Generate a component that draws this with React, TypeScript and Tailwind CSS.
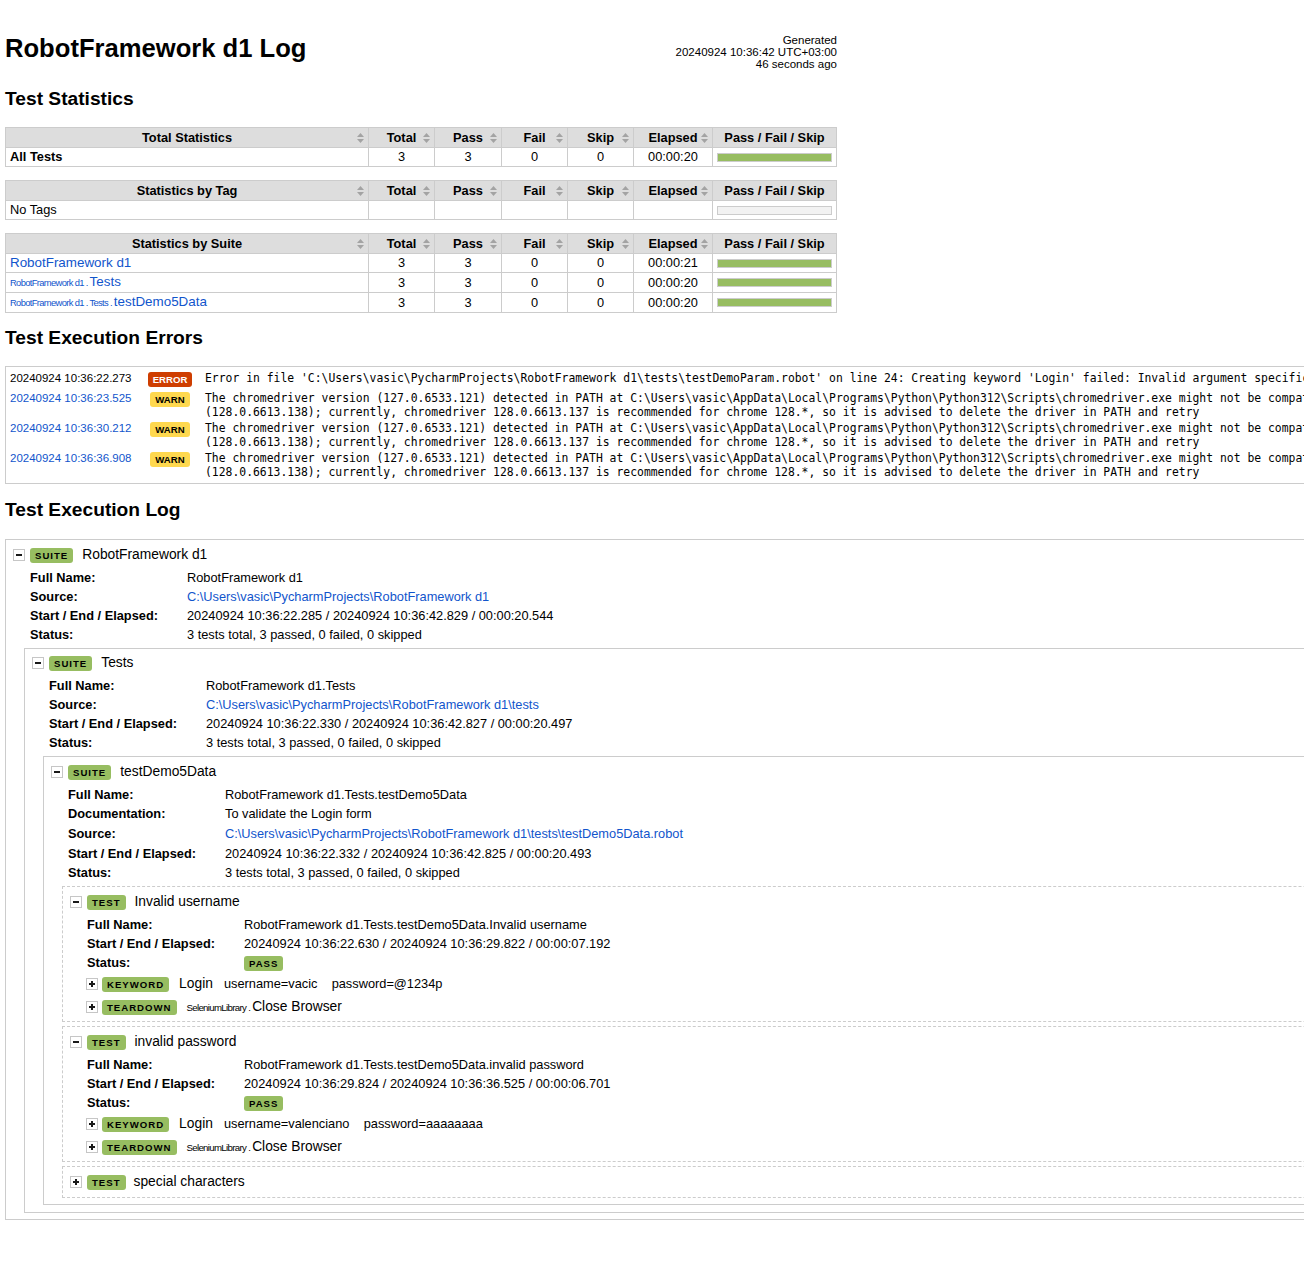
import React from "react";

type StatRow = {
  name: React.ReactNode;
  total: string;
  pass: string;
  fail: string;
  skip: string;
  elapsed: string;
  graph: "pass" | "empty";
};

const SortIcon = () => (
  <svg width="7" height="10" viewBox="0 0 7 10" className="shrink-0">
    <path d="M3.5 0L7 4H0Z" fill="#a3a3a3" />
    <path d="M0 6H7L3.5 10Z" fill="#a3a3a3" />
  </svg>
);

const HeadCell = ({ children, sort = true }: { children: React.ReactNode; sort?: boolean }) => (
  <th className="border border-[#ccc] bg-[#ddd] px-[4px] py-[2px] font-bold leading-[15px]">
    <div className="grid grid-cols-[1fr_auto_1fr] items-center">
      <span />
      <span className="whitespace-nowrap">{children}</span>
      <span className="flex justify-end">{sort && <SortIcon />}</span>
    </div>
  </th>
);

const StatsTable = ({ title, rows }: { title: string; rows: StatRow[] }) => (
  <table className="w-[832px] table-fixed border-collapse">
    <colgroup>
      <col />
      <col className="w-[66px]" />
      <col className="w-[67px]" />
      <col className="w-[66px]" />
      <col className="w-[66px]" />
      <col className="w-[79px]" />
      <col className="w-[124px]" />
    </colgroup>
    <thead>
      <tr>
        <HeadCell>{title}</HeadCell>
        <HeadCell>Total</HeadCell>
        <HeadCell>Pass</HeadCell>
        <HeadCell>Fail</HeadCell>
        <HeadCell>Skip</HeadCell>
        <HeadCell>Elapsed</HeadCell>
        <HeadCell sort={false}>Pass / Fail / Skip</HeadCell>
      </tr>
    </thead>
    <tbody>
      {rows.map((r, i) => (
        <tr key={i} className="leading-[16px]">
          <td className="border border-[#ccc] px-[4px] py-[1px] text-left align-middle">{r.name}</td>
          <td className="border border-[#ccc] px-[4px] py-[1px] text-center align-middle">{r.total}</td>
          <td className="border border-[#ccc] px-[4px] py-[1px] text-center align-middle">{r.pass}</td>
          <td className="border border-[#ccc] px-[4px] py-[1px] text-center align-middle">{r.fail}</td>
          <td className="border border-[#ccc] px-[4px] py-[1px] text-center align-middle">{r.skip}</td>
          <td className="border border-[#ccc] px-[4px] py-[1px] text-center align-middle">{r.elapsed}</td>
          <td className="border border-[#ccc] px-[4px] py-[1px] align-middle">
            {r.graph === "pass" ? (
              <div className="h-[9px] border border-[#ccc] bg-[#97bd61]" />
            ) : (
              <div className="h-[9px] border border-[#ccc] bg-[#f2f2f2]" />
            )}
          </td>
        </tr>
      ))}
    </tbody>
  </table>
);

const Parent = ({ children }: { children: React.ReactNode }) => (
  <span className="text-[9.4px] tracking-[-0.07em]">{children}</span>
);

const SuiteLink = ({ parent, name }: { parent?: string; name: string }) => (
  <span className="text-[#15c]">
    {parent && <Parent>{parent} . </Parent>}
    <span className="text-[13.4px]">{name}</span>
  </span>
);

const chromeMsg =
  "The chromedriver version (127.0.6533.121) detected in PATH at C:\\Users\\vasic\\AppData\\Local\\Programs\\Python\\Python312\\Scripts\\chromedriver.exe might not be compatible with the detected chrome version\n(128.0.6613.138); currently, chromedriver 128.0.6613.137 is recommended for chrome 128.*, so it is advised to delete the driver in PATH and retry";

const errors = [
  {
    time: "20240924 10:36:22.273",
    level: "ERROR",
    link: false,
    msg: "Error in file 'C:\\Users\\vasic\\PycharmProjects\\RobotFramework d1\\tests\\testDemoParam.robot' on line 24: Creating keyword 'Login' failed: Invalid argument specification: Invalid argument syntax 'password=@1234p'.",
  },
  { time: "20240924 10:36:23.525", level: "WARN", link: true, msg: chromeMsg },
  { time: "20240924 10:36:30.212", level: "WARN", link: true, msg: chromeMsg },
  { time: "20240924 10:36:36.908", level: "WARN", link: true, msg: chromeMsg },
];

const Toggle = ({ open }: { open: boolean }) => (
  <svg width="12" height="12" viewBox="0 0 12 12" className="shrink-0">
    <rect x="0.5" y="0.5" width="11" height="11" fill="#fff" stroke="#c6c6c6" />
    <rect x="3" y="5" width="6" height="2" fill="#1a1a1a" />
    {!open && <rect x="5" y="3" width="2" height="6" fill="#1a1a1a" />}
  </svg>
);

const Label = ({ children }: { children: React.ReactNode }) => (
  <span className="inline-block h-[15px] rounded-[3px] bg-[#97bd61] px-[5px] text-[9.6px] font-bold leading-[15px] tracking-[1px] text-black">
    {children}
  </span>
);

const Header = ({ open, kind, name, top }: { open: boolean; kind: string; name: string; top: string }) => (
  <div className={`flex h-[22px] items-center ${top}`}>
    <Toggle open={open} />
    <span className="ml-[5px]">
      <Label>{kind}</Label>
    </span>
    <span className="ml-[9px] text-[13.8px]">{name}</span>
  </div>
);

type MetaRow = [string, React.ReactNode, string?];

const Meta = ({ rows }: { rows: MetaRow[] }) => (
  <div className="ml-[17px] mt-[2px]">
    {rows.map(([k, v, h], i) => (
      <div key={i} className={`flex items-center ${h ?? "h-[19px]"}`}>
        <div className="w-[157px] shrink-0 font-bold">{k}</div>
        <div className="whitespace-nowrap">{v}</div>
      </div>
    ))}
  </div>
);

const Src = ({ children }: { children: React.ReactNode }) => <span className="text-[#15c]">{children}</span>;

const KeywordRow = ({ kind, children }: { kind: string; children: React.ReactNode }) => (
  <div className="ml-[16px] mt-[1px] flex h-[22px] items-center">
    <Toggle open={false} />
    <span className="ml-[4px]">
      <Label>{kind}</Label>
    </span>
    <span className="ml-[10px] flex items-baseline whitespace-pre">{children}</span>
  </div>
);

const TestBox = ({
  name,
  fullName,
  times,
  user,
  password,
}: {
  name: string;
  fullName: string;
  times: string;
  user: string;
  password: string;
}) => (
  <div className="mt-[4px] border border-dashed border-[#ccc] pb-[3px] pl-[7px]">
    <Header open kind="TEST" name={name} top="mt-[4px]" />
    <Meta
      rows={[
        ["Full Name:", fullName],
        ["Start / End / Elapsed:", times],
        ["Status:", <Label key="p">PASS</Label>],
      ]}
    />
    <KeywordRow kind="KEYWORD">
      <span className="text-[13.8px]">Login</span>
      <span className="ml-[11px] text-[12.8px]">{`${user}    ${password}`}</span>
    </KeywordRow>
    <KeywordRow kind="TEARDOWN">
      <span className="text-[9.66px] tracking-[-0.07em]">SeleniumLibrary . </span>
      <span className="text-[13.8px]">Close Browser</span>
    </KeywordRow>
  </div>
);

export default function App() {
  return (
    <div className="w-full overflow-hidden bg-white pb-[45px] pl-[5px] font-['Liberation_Sans',Arial,sans-serif] text-[12.8px] text-black">
      <header className="flex w-[832px] items-start justify-between pt-[33px]">
        <h1 className="text-[25.6px] font-bold leading-[30px]">RobotFramework d1 Log</h1>
        <div className="mt-[1px] text-right text-[11.5px] leading-[12px]">
          <div>Generated</div>
          <div>20240924 10:36:42 UTC+03:00</div>
          <div>46 seconds ago</div>
        </div>
      </header>

      <h2 className="mt-[18px] text-[19.2px] font-bold leading-[22px]">Test Statistics</h2>
      <div className="mt-[17px] flex flex-col gap-[13px]">
        <StatsTable
          title="Total Statistics"
          rows={[
            {
              name: <span className="font-bold">All Tests</span>,
              total: "3",
              pass: "3",
              fail: "0",
              skip: "0",
              elapsed: "00:00:20",
              graph: "pass",
            },
          ]}
        />
        <StatsTable
          title="Statistics by Tag"
          rows={[{ name: "No Tags", total: "", pass: "", fail: "", skip: "", elapsed: "", graph: "empty" }]}
        />
        <StatsTable
          title="Statistics by Suite"
          rows={[
            { name: <SuiteLink name="RobotFramework d1" />, total: "3", pass: "3", fail: "0", skip: "0", elapsed: "00:00:21", graph: "pass" },
            { name: <SuiteLink parent="RobotFramework d1" name="Tests" />, total: "3", pass: "3", fail: "0", skip: "0", elapsed: "00:00:20", graph: "pass" },
            { name: <SuiteLink parent="RobotFramework d1 . Tests" name="testDemo5Data" />, total: "3", pass: "3", fail: "0", skip: "0", elapsed: "00:00:20", graph: "pass" },
          ]}
        />
      </div>

      <h2 className="mt-[14px] text-[19.2px] font-bold leading-[22px]">Test Execution Errors</h2>
      <div className="mt-[17px] w-[1700px] border border-[#ccc] py-[3px] pl-[4px]">
        {errors.map((e, i) => (
          <div key={i} className="flex py-[1px]">
            <div className={`w-[130px] shrink-0 whitespace-nowrap text-[11.5px] leading-[14px] ${e.link ? "text-[#15c]" : "text-black"}`}>{e.time}</div>
            <div className="flex h-[18px] w-[60px] shrink-0 justify-center pt-[1px]">
              {e.level === "ERROR" ? (
                <span className="h-[15px] rounded-[3px] bg-[#ce3e01] px-[5px] text-[9.6px] font-bold leading-[15px] text-white">ERROR</span>
              ) : (
                <span className="h-[15px] rounded-[3px] bg-[#fed84f] px-[5px] text-[9.6px] font-bold leading-[15px] text-black">WARN</span>
              )}
            </div>
            <div className="whitespace-pre pl-[5px] font-['DejaVu_Sans_Mono',monospace] text-[11.4px] leading-[14px]">{e.msg}</div>
          </div>
        ))}
      </div>

      <h2 className="mt-[15px] text-[19.2px] font-bold leading-[22px]">Test Execution Log</h2>
      <div className="mt-[18px] w-[1700px] border border-[#ccc] pb-[6px] pl-[7px]">
        <Header open kind="SUITE" name="RobotFramework d1" top="mt-[4px]" />
        <Meta
          rows={[
            ["Full Name:", "RobotFramework d1"],
            ["Source:", <Src key="s">C:\Users\vasic\PycharmProjects\RobotFramework d1</Src>],
            ["Start / End / Elapsed:", "20240924 10:36:22.285 / 20240924 10:36:42.829 / 00:00:20.544"],
            ["Status:", "3 tests total, 3 passed, 0 failed, 0 skipped"],
          ]}
        />
        <div className="ml-[11px] mt-[4px] border border-[#ccc] pb-[7px] pl-[7px]">
          <Header open kind="SUITE" name="Tests" top="mt-[3px]" />
          <Meta
            rows={[
              ["Full Name:", "RobotFramework d1.Tests"],
              ["Source:", <Src key="s">C:\Users\vasic\PycharmProjects\RobotFramework d1\tests</Src>],
              ["Start / End / Elapsed:", "20240924 10:36:22.330 / 20240924 10:36:42.827 / 00:00:20.497"],
              ["Status:", "3 tests total, 3 passed, 0 failed, 0 skipped"],
            ]}
          />
          <div className="ml-[11px] mt-[4px] border border-[#ccc] pb-[6px] pl-[7px]">
            <Header open kind="SUITE" name="testDemo5Data" top="mt-[4px]" />
            <Meta
              rows={[
                ["Full Name:", "RobotFramework d1.Tests.testDemo5Data"],
                ["Documentation:", "To validate the Login form", "h-[20px]"],
                ["Source:", <Src key="s">C:\Users\vasic\PycharmProjects\RobotFramework d1\tests\testDemo5Data.robot</Src>, "h-[20px]"],
                ["Start / End / Elapsed:", "20240924 10:36:22.332 / 20240924 10:36:42.825 / 00:00:20.493"],
                ["Status:", "3 tests total, 3 passed, 0 failed, 0 skipped"],
              ]}
            />
            <div className="ml-[11px]">
              <TestBox
                name="Invalid username"
                fullName="RobotFramework d1.Tests.testDemo5Data.Invalid username"
                times="20240924 10:36:22.630 / 20240924 10:36:29.822 / 00:00:07.192"
                user="username=vacic"
                password="password=@1234p"
              />
              <TestBox
                name="invalid password"
                fullName="RobotFramework d1.Tests.testDemo5Data.invalid password"
                times="20240924 10:36:29.824 / 20240924 10:36:36.525 / 00:00:06.701"
                user="username=valenciano"
                password="password=aaaaaaaa"
              />
              <div className="mt-[4px] border border-dashed border-[#ccc] pb-[4px] pl-[7px]">
                <div className="mt-[4px] flex h-[22px] items-center">
                  <Toggle open={false} />
                  <span className="ml-[5px]">
                    <Label>TEST</Label>
                  </span>
                  <span className="ml-[8px] text-[13.8px]">special characters</span>
                </div>
              </div>
            </div>
          </div>
        </div>
      </div>
    </div>
  );
}
